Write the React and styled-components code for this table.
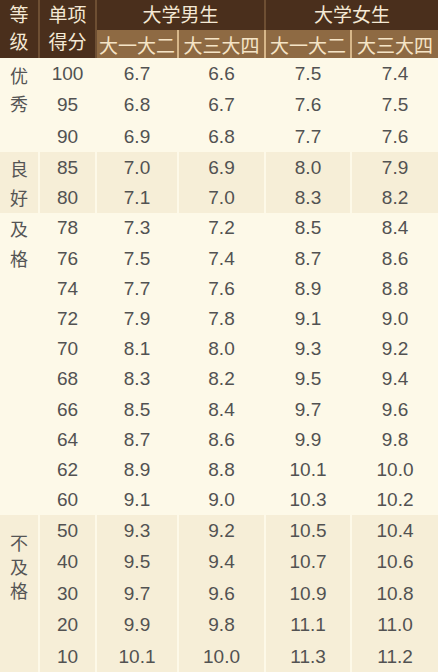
import styled, { createGlobalStyle } from "styled-components";

const GlobalStyle = createGlobalStyle`
  html, body {
    margin: 0;
    padding: 0;
    background: #fdf9e8;
  }
`;

const Table = styled.table`
  width: 438px;
  table-layout: fixed;
  border-collapse: separate;
  border-spacing: 0;
  font-family: "Liberation Sans", "Noto Sans CJK SC", sans-serif;
  color: #525252;
`;

const HeadCell = styled.th`
  background: #4a2f1c;
  color: #f4e8d4;
  font-weight: normal;
  font-size: 19px;
  height: ${(p) => p.$h || 30}px;
  padding: 0;
  text-align: center;
  vertical-align: middle;
  border-left: ${(p) => (p.$first ? "none" : "2px solid #6e4f33")};
  line-height: 27px;
`;

const SubCell = styled.th`
  background: #8e6a43;
  color: #f5e4c6;
  font-weight: normal;
  font-size: 19px;
  height: 28px;
  padding: 0;
  text-align: center;
  border-left: 2px solid ${(p) => (p.$dark ? "#6e4f33" : "#d7b78a")};
  white-space: nowrap;
`;

const Cell = styled.td`
  background: ${(p) => (p.$shade ? "#f6eed7" : "#fdf9e8")};
  border-left: ${(p) => (p.$first ? "none" : "2px solid #fdf9e8")};
  height: ${(p) => p.$h}px;
  padding: 0;
  text-align: center;
  vertical-align: middle;
  font-size: 19px;
  line-height: 1;
`;

const LevelCell = styled(Cell)`
  vertical-align: top;
  padding-top: ${(p) => p.$pad}px;
`;

const LevelChar = styled.div`
  font-size: 18px;
  line-height: ${(p) => p.$lh}px;
  color: #555;
  font-family: "Noto Sans CJK SC", sans-serif;
`;

const groups = [
  {
    name: "优秀",
    shade: false,
    h: 31.3,
    pad: 3,
    lh: 28,
    rows: [
      ["100", "6.7", "6.6", "7.5", "7.4"],
      ["95", "6.8", "6.7", "7.6", "7.5"],
      ["90", "6.9", "6.8", "7.7", "7.6"],
    ],
  },
  {
    name: "良好",
    shade: true,
    h: 30.5,
    pad: 2,
    lh: 29,
    rows: [
      ["85", "7.0", "6.9", "8.0", "7.9"],
      ["80", "7.1", "7.0", "8.3", "8.2"],
    ],
  },
  {
    name: "及格",
    shade: false,
    h: 30.2,
    pad: 0,
    lh: 30,
    rows: [
      ["78", "7.3", "7.2", "8.5", "8.4"],
      ["76", "7.5", "7.4", "8.7", "8.6"],
      ["74", "7.7", "7.6", "8.9", "8.8"],
      ["72", "7.9", "7.8", "9.1", "9.0"],
      ["70", "8.1", "8.0", "9.3", "9.2"],
      ["68", "8.3", "8.2", "9.5", "9.4"],
      ["66", "8.5", "8.4", "9.7", "9.6"],
      ["64", "8.7", "8.6", "9.9", "9.8"],
      ["62", "8.9", "8.8", "10.1", "10.0"],
      ["60", "9.1", "9.0", "10.3", "10.2"],
    ],
  },
  {
    name: "不及格",
    shade: true,
    h: 31.4,
    pad: 15,
    lh: 24,
    rows: [
      ["50", "9.3", "9.2", "10.5", "10.4"],
      ["40", "9.5", "9.4", "10.7", "10.6"],
      ["30", "9.7", "9.6", "10.9", "10.8"],
      ["20", "9.9", "9.8", "11.1", "11.0"],
      ["10", "10.1", "10.0", "11.3", "11.2"],
    ],
  },
];

export default function App() {
  return (
    <>
      <GlobalStyle />
      <Table>
        <colgroup>
          <col style={{ width: 38 }} />
          <col style={{ width: 57 }} />
          <col style={{ width: 82 }} />
          <col style={{ width: 87 }} />
          <col style={{ width: 86 }} />
          <col style={{ width: 88 }} />
        </colgroup>
        <thead>
          <tr>
            <HeadCell rowSpan={2} $first>
              等<br />级
            </HeadCell>
            <HeadCell rowSpan={2}>
              单项<br />得分
            </HeadCell>
            <HeadCell colSpan={2} $h={30}>大学男生</HeadCell>
            <HeadCell colSpan={2} $h={30}>大学女生</HeadCell>
          </tr>
          <tr>
            <SubCell $dark>大一大二</SubCell>
            <SubCell>大三大四</SubCell>
            <SubCell>大一大二</SubCell>
            <SubCell>大三大四</SubCell>
          </tr>
        </thead>
        <tbody>
          {groups.map((g) =>
            g.rows.map((r, i) => (
              <tr key={r[0]}>
                {i === 0 && (
                  <LevelCell
                    rowSpan={g.rows.length}
                    $first
                    $shade={g.shade}
                    $pad={g.pad}
                  >
                    {g.name.split("").map((c) => (
                      <LevelChar key={c} $lh={g.lh}>
                        {c}
                      </LevelChar>
                    ))}
                  </LevelCell>
                )}
                {r.map((v, j) => (
                  <Cell key={j} $shade={g.shade} $h={g.h}>
                    {v}
                  </Cell>
                ))}
              </tr>
            ))
          )}
        </tbody>
      </Table>
    </>
  );
}
